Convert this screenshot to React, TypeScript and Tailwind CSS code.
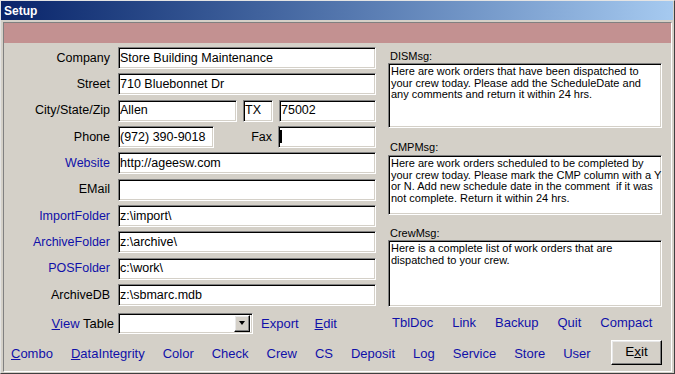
import React from "react";

const sunken =
  "bg-white border border-t-[#808080] border-l-[#808080] border-r-white border-b-white shadow-[inset_1px_1px_0_#000,inset_-1px_-1px_0_#d4d0c8]";
const raised =
  "bg-[#d4d0c8] border border-t-white border-l-white border-r-[#000] border-b-[#000] shadow-[inset_-1px_-1px_0_#808080,inset_1px_1px_0_#e8e8e8]";
const blue = "text-[#1010a8]";

function Field({ label, link, value, children }: { label: string; link?: boolean; value?: string; children?: React.ReactNode }) {
  return (
    <div className="flex h-[22px] items-center">
      <div className={`w-[106px] text-right whitespace-nowrap ${link ? blue : ""}`}>{label}</div>
      <div className="ml-[8px] flex items-center">
        {children ?? (
          <div className={`${sunken} h-[22px] w-[258px] flex items-center pl-[1px] whitespace-nowrap`}>{value}</div>
        )}
      </div>
    </div>
  );
}

function Memo({ h, lines }: { h: string; lines: string[] }) {
  return (
    <div className={`${sunken} ${h} w-[274px] pl-[2px] pt-[2px] text-[11px] leading-[11.7px] whitespace-pre`}>
      {lines.map((l, i) => (
        <div key={i}>{l}</div>
      ))}
    </div>
  );
}

export default function App() {
  return (
    <div className="w-[675px] h-[374px] bg-[#d4d0c8] flex flex-col border border-t-[#e4e4e4] border-l-[#e4e4e4] border-r-[#404040] border-b-[#404040] font-['Liberation_Sans',Arial,sans-serif] text-[12.5px] text-black overflow-hidden">
      <div className="h-[19px] mr-[1px] bg-linear-to-r from-[#0a246a] to-[#a6caf0] flex items-center pl-[3px] text-white font-bold text-[12px]">
        Setup
      </div>
      <div className="flex-1 mt-[2px] ml-[2px] mr-[2px] mb-[1px] border border-t-[#808080] border-l-[#808080] border-r-white border-b-white flex flex-col">
        <div className="h-[20px] bg-[#c39191]" />
        <div className="flex">
          {/* left column */}
          <div className="w-[372px] pt-[4px] flex flex-col">
            <div className="flex flex-col gap-[4.33px]">
              <Field label="Company" value="Store Building Maintenance" />
              <Field label="Street" value="710 Bluebonnet Dr" />
              <Field label="City/State/Zip">
                <div className={`${sunken} h-[22px] w-[119px] flex items-center pl-[1px]`}>Allen</div>
                <div className={`${sunken} h-[22px] w-[30px] ml-[6px] flex items-center pl-[1px]`}>TX</div>
                <div className={`${sunken} h-[22px] w-[97px] ml-[6px] flex items-center pl-[1px]`}>75002</div>
              </Field>
              <Field label="Phone">
                <div className={`${sunken} h-[22px] w-[96px] flex items-center pl-[1px] whitespace-nowrap`}>(972) 390-9018</div>
                <div className="w-[58px] text-right">Fax</div>
                <div className={`${sunken} h-[22px] w-[98px] ml-[6px] flex items-center pl-[1px]`}>
                  <div className="w-[2px] h-[13px] bg-black" />
                </div>
              </Field>
              <Field label="Website" link value="http://ageesw.com" />
              <Field label="EMail" value="" />
              <Field label="ImportFolder" link value="z:\import\" />
              <Field label="ArchiveFolder" link value="z:\archive\" />
              <Field label="POSFolder" link value="c:\work\" />
              <Field label="ArchiveDB" value="z:\sbmarc.mdb" />
            </div>
            <div className="flex h-[21px] items-center mt-[7px] text-[13px]">
              <div className="w-[110px] text-right whitespace-nowrap">
                <span className={blue}>
                  <span className="underline">V</span>iew
                </span>{" "}
                Table
              </div>
              <div className={`${sunken} ml-[4px] h-[21px] w-[135px] flex items-center justify-end pr-[2px]`}>
                <div className={`${raised} w-[16px] h-[17px] flex items-center justify-center`}>
                  <div className="w-0 h-0 border-l-[3.5px] border-r-[3.5px] border-t-[4px] border-l-transparent border-r-transparent border-t-black" />
                </div>
              </div>
              <div className={`${blue} ml-[8px]`}>Export</div>
              <div className={`${blue} ml-[16px]`}>
                <span className="underline">E</span>dit
              </div>
            </div>
          </div>
          {/* right column */}
          <div className="w-[274px] ml-[12px] flex flex-col text-[11px]">
            <div className="h-[14px] mt-[6px] leading-[14px] pl-[2px]">DISMsg:</div>
            <Memo
              h="h-[65px]"
              lines={[
                "Here are work orders that have been dispatched to",
                "your crew today. Please add the ScheduleDate and",
                "any comments and return it within 24 hrs.",
              ]}
            />
            <div className="h-[14px] mt-[12px] leading-[14px] pl-[2px]">CMPMsg:</div>
            <Memo
              h="h-[60px] mt-[1px]"
              lines={[
                "Here are work orders scheduled to be completed by",
                "your crew today. Please mark the CMP column with a Y",
                "or N. Add new schedule date in the comment  if it was",
                "not complete. Return it within 24 hrs.",
              ]}
            />
            <div className="h-[14px] mt-[11px] leading-[14px] pl-[2px]">CrewMsg:</div>
            <Memo
              h="h-[67px]"
              lines={["Here is a complete list of work orders that are", "dispatched to your crew."]}
            />
            <div className={`flex h-[22px] mt-[5px] items-center pl-[4px] gap-[19px] text-[13px] ${blue}`}>
              <span>TblDoc</span>
              <span>Link</span>
              <span>Backup</span>
              <span>Quit</span>
              <span>Compact</span>
            </div>
          </div>
        </div>
        {/* bottom row */}
        <div className={`flex h-[26px] mt-[5px] items-center pl-[7px] pr-[9px] gap-[18px] text-[13px] ${blue}`}>
          <span className="pt-[4px]">
            <span className="underline">C</span>ombo
          </span>
          <span className="pt-[4px]">
            <span className="underline">D</span>ataIntegrity
          </span>
          <span className="pt-[4px]">Color</span>
          <span className="pt-[4px]">Check</span>
          <span className="pt-[4px]">Crew</span>
          <span className="pt-[4px]">CS</span>
          <span className="pt-[4px]">Deposit</span>
          <span className="pt-[4px]">Log</span>
          <span className="pt-[4px]">Service</span>
          <span className="pt-[4px]">Store</span>
          <span className="pt-[4px]">User</span>
          <div className={`${raised} ml-auto w-[51px] h-[25px] flex items-center justify-center text-black text-[13.5px]`}>
            <span>
              E<span className="underline">x</span>it
            </span>
          </div>
        </div>
      </div>
    </div>
  );
}
